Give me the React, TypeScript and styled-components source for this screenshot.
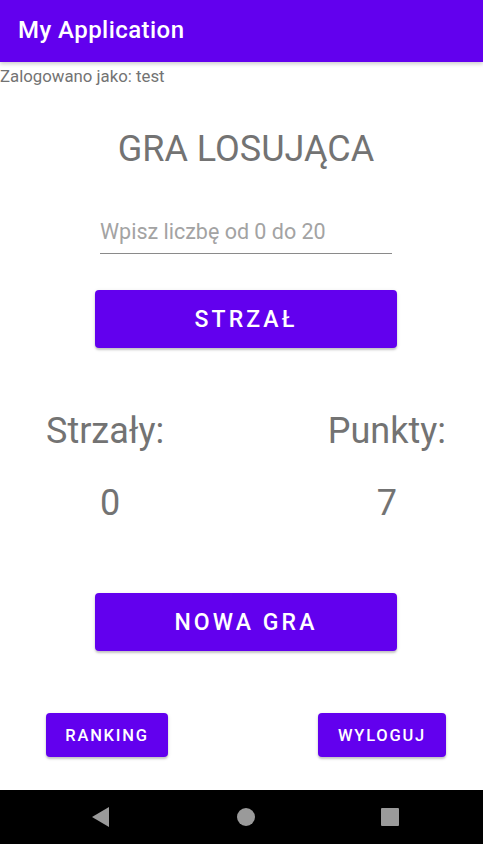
import React from "react";
import styled, { createGlobalStyle } from "styled-components";

const Global = createGlobalStyle`
  html, body { margin: 0; padding: 0; background: #ffffff; }
  body { font-family: Roboto, "Noto Sans", "Liberation Sans", sans-serif; }
  * { box-sizing: border-box; }
`;

const Screen = styled.div`
  display: flex;
  flex-direction: column;
  min-height: 100vh;
  width: 100%;
`;

const AppBar = styled.header`
  height: 62px;
  background: #6200ee;
  display: flex;
  align-items: center;
  padding: 0 0 2px 18px;
  box-shadow: 0 2px 4px rgba(0, 0, 0, 0.2);
  position: relative;
  z-index: 1;
`;

const AppTitle = styled.h1`
  margin: 0;
  color: #ffffff;
  font-size: 24px;
  font-weight: 500;
  letter-spacing: 0.45px;
`;

const Main = styled.main`
  flex: 1;
  display: flex;
  flex-direction: column;
`;

const Status = styled.div`
  margin-top: 4px;
  font-size: 16.8px;
  line-height: 20px;
  color: #737373;
`;

const Content = styled.div`
  width: 400px;
  margin-left: 46px;
  display: flex;
  flex-direction: column;
  align-items: center;
`;

const Heading = styled.h2`
  margin: 42px 0 0;
  font-size: 36px;
  line-height: 42px;
  font-weight: 400;
  color: #737373;
`;

const NumberInput = styled.input`
  margin-top: 39px;
  width: 292px;
  height: 45px;
  padding: 0;
  border: none;
  border-bottom: 1px solid #8a8a8a;
  font-family: inherit;
  font-size: 21.5px;
  color: #333;
  outline: none;
  background: transparent;
  &::placeholder { color: #a3a3a3; }
`;

const PrimaryButton = styled.button<{ $top: number }>`
  margin-top: ${(p) => p.$top}px;
  width: 302px;
  height: 58px;
  border: none;
  border-radius: 4px;
  background: #6200ee;
  color: #ffffff;
  font-family: inherit;
  font-size: 23px;
  font-weight: 500;
  letter-spacing: 3.1px;
  box-shadow: 0 2px 2px rgba(0, 0, 0, 0.18), 0 1px 4px rgba(0, 0, 0, 0.1);
`;

const Stats = styled.div`
  margin-top: 62px;
  width: 100%;
  display: flex;
  justify-content: space-between;
`;

const Stat = styled.div`
  display: flex;
  flex-direction: column;
  align-items: center;
  color: #737373;
  font-size: 36px;
  line-height: 42px;
`;

const StatValue = styled.div<{ $shift: number }>`
  margin-top: 30px;
  padding-left: ${(p) => p.$shift}px;
`;

const SmallRow = styled.div`
  margin-top: 62px;
  width: 100%;
  display: flex;
  justify-content: space-between;
`;

const SmallButton = styled.button<{ $w: number }>`
  width: ${(p) => p.$w}px;
  height: 44px;
  border: none;
  border-radius: 4px;
  background: #6200ee;
  color: #ffffff;
  font-family: inherit;
  font-size: 16.5px;
  font-weight: 500;
  letter-spacing: 1.75px;
  box-shadow: 0 2px 2px rgba(0, 0, 0, 0.18), 0 1px 4px rgba(0, 0, 0, 0.1);
`;

const NavBar = styled.nav`
  height: 54px;
  background: #000000;
  display: flex;
  align-items: center;
  justify-content: space-between;
  padding: 0 84px 0 92px;
`;

const NavSlot = styled.div`
  width: 18px;
  height: 18px;
  display: flex;
  align-items: center;
  justify-content: center;
`;

const Home = styled.div`
  width: 18px;
  height: 18px;
  border-radius: 50%;
  background: #9a9a9a;
`;

const Recents = styled.div`
  width: 18px;
  height: 18px;
  border-radius: 1px;
  background: #9a9a9a;
`;

export default function App() {
  return (
    <>
      <Global />
      <Screen>
        <AppBar>
          <AppTitle>My Application</AppTitle>
        </AppBar>
        <Main>
          <Status>Zalogowano jako: test</Status>
          <Content>
            <Heading>GRA LOSUJĄCA</Heading>
            <NumberInput placeholder="Wpisz liczbę od 0 do 20" />
            <PrimaryButton $top={36}>STRZAŁ</PrimaryButton>
            <Stats>
              <Stat>
                <div>Strzały:</div>
                <StatValue $shift={10}>0</StatValue>
              </Stat>
              <Stat>
                <div>Punkty:</div>
                <StatValue $shift={0}>7</StatValue>
              </Stat>
            </Stats>
            <PrimaryButton $top={69}>NOWA GRA</PrimaryButton>
            <SmallRow>
              <SmallButton $w={122}>RANKING</SmallButton>
              <SmallButton $w={128}>WYLOGUJ</SmallButton>
            </SmallRow>
          </Content>
        </Main>
        <NavBar>
          <NavSlot>
            <svg width="18" height="20" viewBox="0 0 18 20">
              <path d="M17 0 L17 20 L0 10 Z" fill="#9a9a9a" />
            </svg>
          </NavSlot>
          <Home />
          <Recents />
        </NavBar>
      </Screen>
    </>
  );
}
